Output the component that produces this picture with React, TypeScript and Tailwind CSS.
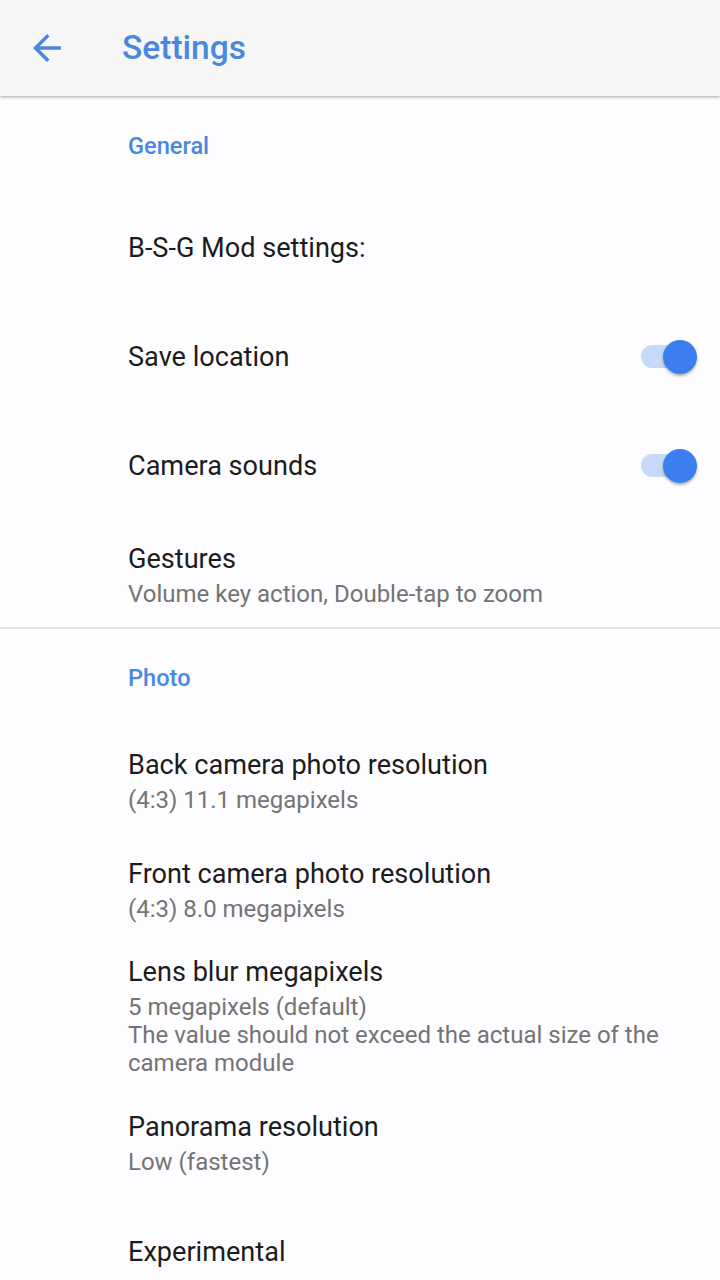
import React from "react";

const font = { fontFamily: "Roboto, 'Noto Sans', sans-serif" };

function Toggle() {
  return (
    <div className="relative w-[56px] h-[36px] shrink-0 flex items-center">
      <div className="w-[54px] h-[23px] rounded-full bg-[#c6d9f7]" />
      <div className="absolute right-0 top-[1px] w-[34px] h-[34px] rounded-full bg-[#3b7ff0] shadow-[0_2px_3px_rgba(0,0,0,0.3)]" />
    </div>
  );
}

function Header({ title, cls }: { title: string; cls: string }) {
  return (
    <div className={cls}>
      <div className="text-[23.6px] leading-[24px] font-medium text-[#4a88e0]">{title}</div>
    </div>
  );
}

function Item({
  title,
  summary,
  toggle,
}: {
  title: string;
  summary?: string[];
  toggle?: boolean;
}) {
  return (
    <div className="min-h-[109px] flex items-center pl-[128px] pr-[23px] py-[11px]">
      <div className="flex-1 flex flex-col">
        <div className="text-[27.1px] leading-[34px] text-[#1c1c1c]">{title}</div>
        {summary && (
          <div className="mt-[4px] flex flex-col">
            {summary.map((s, i) => (
              <div key={i} className="text-[24px] leading-[28px] text-[#747474]">
                {s}
              </div>
            ))}
          </div>
        )}
      </div>
      {toggle && <Toggle />}
    </div>
  );
}

export default function App() {
  return (
    <div style={font} className="w-[720px] h-[1280px] overflow-hidden bg-[#fdfcfe] flex flex-col">
      <div className="relative z-10 h-[96px] shrink-0 bg-[#f6f6f6] shadow-[0_1px_3px_rgba(0,0,0,0.35)] flex items-center">
        <div className="w-[122px] pl-[26px] flex items-center">
          <svg width="42" height="42" viewBox="0 0 24 24" fill="#4a88e0">
            <path d="M20 11H7.83l5.59-5.59L12 4l-8 8 8 8 1.41-1.41L7.83 13H20v-2z" />
          </svg>
        </div>
        <div className="text-[33.5px] leading-[40px] font-medium text-[#4a88e0]">Settings</div>
      </div>
      <div className="flex flex-col">
        <Header title="General" cls="pl-[128px] pt-[38px] pb-[35px]" />
        <Item title="B-S-G Mod settings:" />
        <Item title="Save location" toggle />
        <Item title="Camera sounds" toggle />
        <Item title="Gestures" summary={["Volume key action, Double-tap to zoom"]} />
        <div className="h-[2px] -mt-[2px] bg-[#e3e3e3]" />
        <Header title="Photo" cls="pl-[128px] pt-[37px] pb-[36px]" />
        <Item title="Back camera photo resolution" summary={["(4:3) 11.1 megapixels"]} />
        <Item title="Front camera photo resolution" summary={["(4:3) 8.0 megapixels"]} />
        <Item
          title="Lens blur megapixels"
          summary={[
            "5 megapixels (default)",
            "The value should not exceed the actual size of the",
            "camera module",
          ]}
        />
        <Item title="Panorama resolution" summary={["Low (fastest)"]} />
        <Item title="Experimental" />
      </div>
    </div>
  );
}
